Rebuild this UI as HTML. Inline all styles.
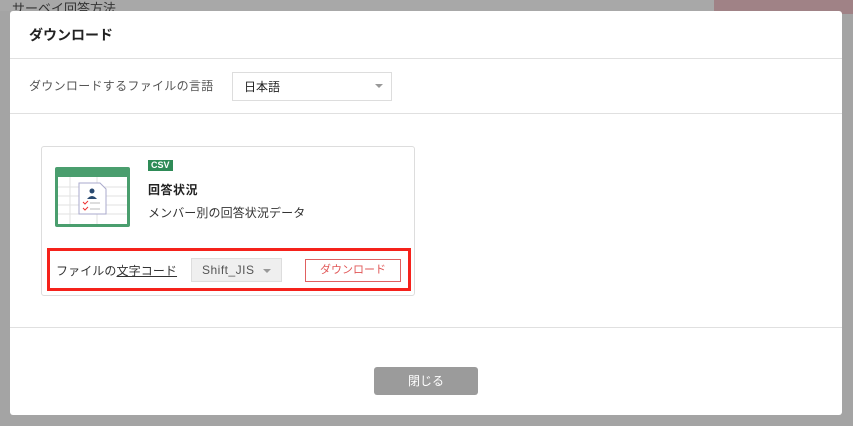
<!DOCTYPE html>
<html><head><meta charset="utf-8"><style>
*{box-sizing:border-box;margin:0;padding:0}
body{width:853px;height:426px;background:#a4a4a4;font-family:"Liberation Sans","Noto Sans CJK JP",sans-serif;position:relative;overflow:hidden;color:#333}
.abs{position:absolute}
.modal{left:10px;top:11px;width:832px;height:404px;background:#fff;border-radius:3px}
.hl{height:1px;background:#e0e0e0;left:0;width:832px}
</style></head><body>
<div class="abs" style="left:0;top:0;width:853px;height:11px;background:#a8a8a8"></div>
<div class="abs" style="left:12px;top:-2px;font-size:13px;color:#333">サーベイ回答方法</div>
<div class="abs" style="left:714px;top:0;width:139px;height:14px;background:#a08286"></div>
<div class="abs modal">
  <div class="abs" style="left:19px;top:14px;font-size:14px;font-weight:bold;color:#222">ダウンロード</div>
  <div class="abs hl" style="top:47px"></div>
  <div class="abs" style="left:19px;top:66px;font-size:12px;color:#555;letter-spacing:0.3px">ダウンロードするファイルの言語</div>
  <div class="abs" style="left:222px;top:61px;width:160px;height:29px;border:1px solid #ddd;font-size:12px;padding:5px 11px;color:#222">日本語<span class="abs" style="right:8px;top:11px;border:4px solid transparent;border-top:4px solid #999;border-bottom:0"></span></div>
  <div class="abs hl" style="top:102px"></div>
  <div class="abs" style="left:31px;top:135px;width:374px;height:150px;border:1px solid #ddd;border-radius:3px">
    <svg class="abs" style="left:13px;top:20px" width="75" height="60" viewBox="0 0 75 60">
      <rect width="75" height="60" rx="2" fill="#4a9e6e"/>
      <rect x="3" y="10" width="69" height="47" fill="#fff"/>
      <g stroke="#e2e2e2" stroke-width="1"><path d="M3 20H72M3 29H72M3 38H72M3 47H72M15 10V57M42 10V57"/></g>
      <path d="M24 16H45L51 22V47H24Z" fill="#fff" stroke="#aac" stroke-width="1"/>
      <circle cx="37" cy="24" r="2.5" fill="#2a4a70"/><path d="M32 32Q37 26 42 32Z" fill="#2a4a70"/>
      <path d="M28 35l2 2 3-3M28 41l2 2 3-3" stroke="#e33" fill="none"/>
      <path d="M35 36H45M35 42H45" stroke="#bbb"/>
    </svg>
    <div class="abs" style="left:106px;top:13px;background:#2e8b57;color:#fff;font-size:9px;font-weight:bold;padding:0 3px;line-height:11px">CSV</div>
    <div class="abs" style="left:106px;top:34px;font-size:12px;font-weight:bold;color:#222;letter-spacing:0.5px">回答状況</div>
    <div class="abs" style="left:106px;top:57px;font-size:12px;color:#333;letter-spacing:0.1px">メンバー別の回答状況データ</div>
  </div>
  <div class="abs" style="left:37px;top:237px;width:364px;height:43px;border:3px solid #f5221b"></div>
  <div class="abs" style="left:46px;top:251px;font-size:12px;color:#333;letter-spacing:0.1px">ファイルの<span style="text-decoration:underline">文字コード</span></div>
  <div class="abs" style="left:181px;top:247px;width:91px;height:24px;background:#efefef;border:1px solid #ddd;font-size:12px;padding:4px 10px;color:#555;letter-spacing:0.5px">Shift_JIS<span class="abs" style="right:10px;top:10px;border:4px solid transparent;border-top:4px solid #999;border-bottom:0"></span></div>
  <div class="abs" style="left:295px;top:248px;width:96px;height:23px;border:1px solid #e06060;color:#e05555;font-size:11px;text-align:center;line-height:21px">ダウンロード</div>
  <div class="abs hl" style="top:316px"></div>
  <div class="abs" style="left:364px;top:356px;width:104px;height:28px;background:#9b9b9b;border-radius:3px;color:#fff;font-size:12px;text-align:center;line-height:28px">閉じる</div>
</div>
</body></html>
